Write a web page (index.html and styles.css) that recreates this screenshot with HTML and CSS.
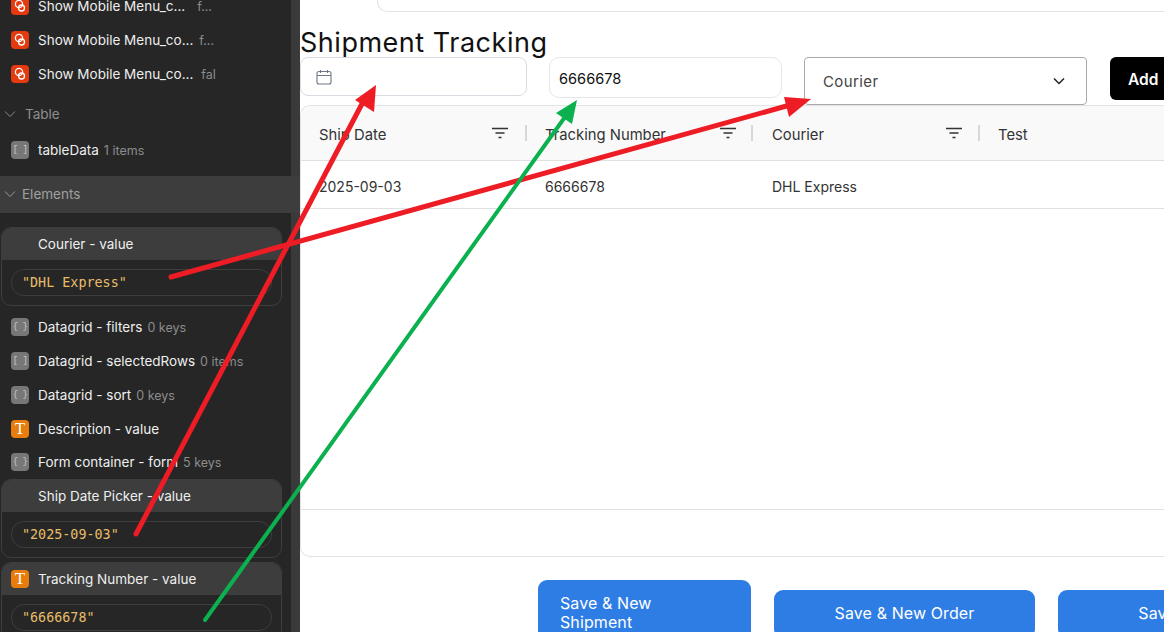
FILE: index.html
```html
<!DOCTYPE html>
<html lang="en">
<head>
<meta charset="utf-8">
<title>Shipment Tracking</title>
<link rel="stylesheet" href="styles.css">
</head>
<body>
<aside class="sidebar">
  <div class="panel panel-top">
    <div class="row row-first"><span class="ico ico-red"><svg viewBox="0 0 18 18" width="18" height="18"><circle cx="8" cy="7" r="3.6" fill="none" stroke="#fff" stroke-width="1.3"/><circle cx="10.5" cy="11" r="3" fill="none" stroke="#fff" stroke-width="1.3"/></svg></span><span class="name">Show Mobile Menu_c...</span><span class="meta m1">f...</span></div>
    <div class="row"><span class="ico ico-red"><svg viewBox="0 0 18 18" width="18" height="18"><circle cx="8" cy="7" r="3.6" fill="none" stroke="#fff" stroke-width="1.3"/><circle cx="10.5" cy="11" r="3" fill="none" stroke="#fff" stroke-width="1.3"/></svg></span><span class="name">Show Mobile Menu_co...</span><span class="meta m2">f...</span></div>
    <div class="row"><span class="ico ico-red"><svg viewBox="0 0 18 18" width="18" height="18"><circle cx="8" cy="7" r="3.6" fill="none" stroke="#fff" stroke-width="1.3"/><circle cx="10.5" cy="11" r="3" fill="none" stroke="#fff" stroke-width="1.3"/></svg></span><span class="name">Show Mobile Menu_co...</span><span class="meta m3">fal</span></div>
    <div class="section"><svg class="chev" viewBox="0 0 12 8" width="12" height="8"><path d="M1 1.5 6 6.5 11 1.5" fill="none" stroke="#8a8a8a" stroke-width="1"/></svg><span class="sec-table">Table</span></div>
    <div class="row row-table"><span class="ico ico-grey">[ ]</span><span class="name">tableData</span><span class="meta">1 items</span></div>
  </div>
  <div class="section section-active"><svg class="chev" viewBox="0 0 12 8" width="12" height="8"><path d="M1 1.5 6 6.5 11 1.5" fill="none" stroke="#9a9a9a" stroke-width="1"/></svg><span>Elements</span></div>
  <div class="panel panel-elements">
    <div class="card">
      <div class="card-head"><span class="ico ico-blank"></span><span class="name">Courier - value</span></div>
      <div class="card-body"><div class="value">"DHL Express"</div></div>
    </div>
    <div class="row"><span class="ico ico-grey">{ }</span><span class="name">Datagrid - filters</span><span class="meta">0 keys</span></div>
    <div class="row"><span class="ico ico-grey">[ ]</span><span class="name">Datagrid - selectedRows</span><span class="meta">0 items</span></div>
    <div class="row"><span class="ico ico-grey">{ }</span><span class="name">Datagrid - sort</span><span class="meta">0 keys</span></div>
    <div class="row row-short"><span class="ico ico-orange">T</span><span class="name">Description - value</span></div>
    <div class="row"><span class="ico ico-grey">{ }</span><span class="name">Form container - form</span><span class="meta">5 keys</span></div>
    <div class="card">
      <div class="card-head"><span class="ico ico-blank"></span><span class="name">Ship Date Picker - value</span></div>
      <div class="card-body"><div class="value">"2025-09-03"</div></div>
    </div>
    <div class="card">
      <div class="card-head"><span class="ico ico-orange">T</span><span class="name">Tracking Number - value</span></div>
      <div class="card-body"><div class="value">"6666678"</div></div>
    </div>
  </div>
</aside>
<main class="content">
  <div class="top-box"></div>
  <h1 class="title">Shipment Tracking</h1>
  <div class="filters">
    <div class="field field-date"><svg viewBox="0 0 16 16" width="16" height="16"><rect x="1" y="2.5" width="14" height="12.5" rx="2" fill="none" stroke="#6f7787" stroke-width="1.1"/><path d="M1 6.5H15M4.5 1V4M11.5 1V4" fill="none" stroke="#6f7787" stroke-width="1.1"/></svg></div>
    <div class="field field-text">6666678</div>
    <div class="field-select"><span>Courier</span><svg viewBox="0 0 12 8" width="12" height="8"><path d="M1 1.5 6 6.5 11 1.5" fill="none" stroke="#222" stroke-width="1.5"/></svg></div>
    <button class="add">Add</button>
  </div>
  <div class="grid">
    <div class="grid-head">
      <div class="th col-1"><span>Ship Date</span><svg class="filter" viewBox="0 0 16 12" width="16" height="12"><path d="M0 1.5H16M3.5 6H12.5M6.5 10.5H9.5" stroke="#333" stroke-width="1.4"/></svg><i class="sep"></i></div>
      <div class="th col-2"><span>Tracking Number</span><svg class="filter" viewBox="0 0 16 12" width="16" height="12"><path d="M0 1.5H16M3.5 6H12.5M6.5 10.5H9.5" stroke="#333" stroke-width="1.4"/></svg><i class="sep"></i></div>
      <div class="th col-3"><span>Courier</span><svg class="filter" viewBox="0 0 16 12" width="16" height="12"><path d="M0 1.5H16M3.5 6H12.5M6.5 10.5H9.5" stroke="#333" stroke-width="1.4"/></svg><i class="sep"></i></div>
      <div class="th col-4"><span>Test</span></div>
    </div>
    <div class="grid-row">
      <div class="td col-1">2025-09-03</div>
      <div class="td col-2">6666678</div>
      <div class="td col-3">DHL Express</div>
    </div>
    <div class="grid-empty"></div>
    <div class="grid-foot"></div>
  </div>
  <div class="actions">
    <button class="btn btn-a">Save &amp; New Shipment</button>
    <button class="btn btn-b">Save &amp; New Order</button>
    <button class="btn btn-c">Save &amp; Close</button>
  </div>
</main>
<svg class="arrows" viewBox="0 0 1164 632" width="1164" height="632">
  <g stroke-linecap="round" fill="none">
    <path d="M171 277 790 105" stroke="#ee1c25" stroke-width="5"/>
    <path d="M136 534 364 100" stroke="#ee1c25" stroke-width="5"/>
    <path d="M205 620 565 117" stroke="#0bb04f" stroke-width="4"/>
  </g>
  <polygon points="376,85 374,112 355,100" fill="#ee1c25"/>
  <polygon points="577,100 572,124 556,113" fill="#0bb04f"/>
  <polygon points="811,99 784,97 789,117" fill="#ee1c25"/>
</svg>
</body>
</html>
```

FILE: styles.css
```css
* { box-sizing: border-box; }
html, body { margin: 0; height: 632px; overflow: hidden; }
body {
  position: relative;
  display: flex;
  width: 1164px;
  background: #fff;
  font-family: "Inter", "Liberation Sans", sans-serif;
}
.sidebar {
  width: 300px;
  flex: none;
  height: 632px;
  overflow: hidden;
  background: #3a3a3a;
  color: #eee;
  font-size: 13.5px;
}
.panel {
  width: 291px;
  background: #262626;
}
.panel-top { height: 176px; overflow: hidden; }
.panel-elements { padding: 14px 0 0 1px; height: 419px; }
.row {
  display: flex;
  align-items: center;
  height: 34px;
  padding-left: 11px;
  white-space: nowrap;
}
.panel-elements .row { padding-left: 10px; }
.row-first { margin-top: -11px; }
.row-table { margin-top: 2px; }
.panel-elements .row-short { height: 33px; }
.ico {
  width: 18px;
  height: 18px;
  flex: none;
  margin-right: 9px;
  border-radius: 4px;
  display: flex;
  align-items: center;
  justify-content: center;
  font-size: 9px;
  color: #c9c9c9;
}
.ico-red { background: #e5390f; }
.ico-grey { background: #777; font-family: "Liberation Mono", monospace; font-size: 9px; letter-spacing: -0.5px; }
.ico-orange { background: #e87d0d; color: #fff; font-family: "Liberation Serif", serif; font-size: 17px; }
.ico-blank { background: transparent; }
.name { color: #eee; }
.meta { color: #8c8c8c; font-size: 12.5px; margin-left: 5px; }
.m1 { margin-left: 12px; }
.m2 { margin-left: 6px; }
.m3 { margin-left: 8px; }
.section {
  display: flex;
  align-items: center;
  height: 34px;
  padding-left: 4px;
  color: #8f8f8f;
  margin-top: 6px;
}
.chev { margin-right: 9px; }
.section-active {
  background: #3d3d3d;
  width: 300px;
  height: 37px;
  margin-top: 0;
  padding-bottom: 1px;
  color: #a0a0a0;
}
.section-active .chev { margin-right: 6px; }
.card {
  width: 281px;
  border: 1px solid #3d3d3d;
  border-radius: 10px;
  overflow: hidden;
}
.card + .row { margin-top: 4px; }
.card + .card { margin-top: 4px; }
.card-head {
  display: flex;
  align-items: center;
  height: 32px;
  padding-left: 9px;
  background: #3d3d3d;
}
.card-body { padding: 9px; }
.value {
  height: 27px;
  border: 1px solid #3d3d3d;
  border-radius: 13px;
  padding-left: 10px;
  line-height: 25px;
  color: #e8bd68;
  font-family: "DejaVu Sans Mono", monospace;
  font-size: 13.4px;
}
.content {
  flex: 1;
  min-width: 0;
  height: 632px;
  overflow: hidden;
  color: #222;
}
.top-box {
  width: 787px;
  height: 12px;
  margin-left: 77px;
  border-left: 1px solid #e3e3e3;
  border-bottom: 1px solid #e3e3e3;
  border-bottom-left-radius: 10px;
}
.title {
  margin: 15px 0 -2px;
  font-weight: 400;
  font-size: 27px;
  line-height: 32px;
  letter-spacing: 0.52px;
  color: #111;
  white-space: nowrap;
}
.filters {
  display: flex;
  align-items: flex-start;
  width: 900px;
  height: 48px;
}
.field {
  height: 39px;
  border: 1px solid #d9dbe3;
  border-radius: 8px;
  font-size: 14.6px;
  display: flex;
  align-items: center;
  color: #111;
  flex: none;
}
.field-date { width: 227px; padding-left: 15px; }
.field-text {
  width: 233px;
  height: 41px;
  margin-left: 22px;
  padding: 2px 0 0 9px;
  border-color: #e6e6e6;
  border-radius: 10px;
}
.field-select {
  width: 283px;
  height: 48px;
  margin-left: 22px;
  border: 1px solid #aaa;
  border-radius: 4px;
  padding: 0 21px 0 18px;
  display: flex;
  align-items: center;
  justify-content: space-between;
  font-size: 15px;
  letter-spacing: 0.4px;
  color: #444;
  flex: none;
}
.add {
  flex: none;
  width: 70px;
  height: 43px;
  margin-left: 23px;
  background: #000;
  color: #fff;
  border: none;
  border-radius: 6px;
  font: 600 15.5px "Inter", sans-serif;
  padding: 2px 0 0 18px;
  text-align: left;
}
.grid {
  width: 900px;
  height: 452px;
  border: 1px solid #e3e3e3;
  border-right: none;
  border-radius: 10px 0 0 10px;
}
.grid-head {
  display: flex;
  height: 55px;
  background: #f9f9f9;
  border-bottom: 1px solid #e0e0e0;
  border-top-left-radius: 10px;
  font-size: 14.8px;
  color: #333;
}
.th, .td {
  position: relative;
  flex: none;
  display: flex;
  align-items: center;
  padding: 3px 0 0 18px;
}
.col-1 { width: 226px; }
.col-2 { width: 226px; }
.col-3 { width: 227px; padding-left: 19px; }
.col-4 { width: 200px; }
.filter { position: absolute; right: 18px; top: 21px; }
.col-1 .filter { right: 19px; }
.col-2 .filter { right: 17px; }
.sep { position: absolute; right: 0; top: 19px; width: 2px; height: 16px; background: #d8d8d8; }
.grid-row {
  display: flex;
  height: 48px;
  border-bottom: 1px solid #e0e0e0;
  font-size: 14px;
  color: #333;
}
.grid-empty { height: 301px; border-bottom: 1px solid #e0e0e0; }
.grid-foot { height: 45px; }
.actions {
  display: flex;
  align-items: center;
  margin-top: 23px;
  padding-left: 238px;
  width: 1100px;
  height: 68px;
}
.btn {
  flex: none;
  height: 48px;
  background: #2e7de5;
  color: #fff;
  border: none;
  border-radius: 9px;
  font: 400 16px/19px "Inter", sans-serif;
  letter-spacing: 0.1px;
  padding: 0 0 2px;
}
.btn-a { width: 213px; height: 68px; text-align: left; padding: 0 40px 2px 22px; }
.btn-b { width: 261px; margin-left: 23px; }
.btn-c { width: 261px; margin-left: 23px; }
.arrows { position: absolute; left: 0; top: 0; pointer-events: none; }
```
